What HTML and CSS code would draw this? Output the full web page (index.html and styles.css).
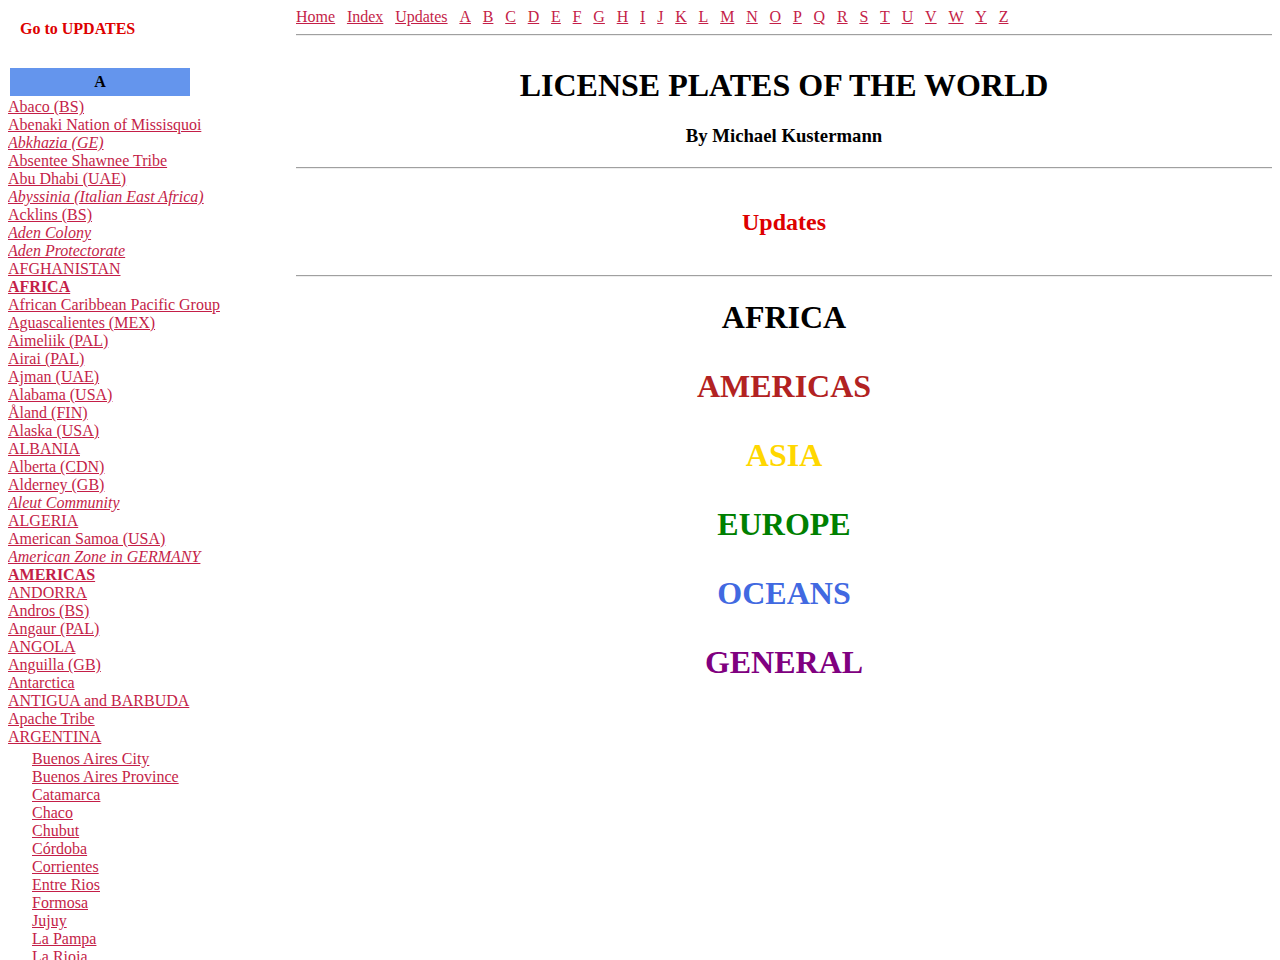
FILE: index.html
```html
<!DOCTYPE html>
<html lang="en">
<head>
    <meta charset="UTF-8">
    <title>License Plates of the World</title>
    <link rel="stylesheet" href="styles.css">
</head>
<body>

    <div class="page">
        <div class="side">
            <p class="goto"><a href="#updates">Go to UPDATES</a></p>

            <div class="letter">A</div>
            <ul class="countries">
                <li><a href="#">Abaco (BS)</a></li>
                <li><a href="#">Abenaki Nation of Missisquoi</a></li>
                <li><a href="#" class="old">Abkhazia (GE)</a></li>
                <li><a href="#">Absentee Shawnee Tribe</a></li>
                <li><a href="#">Abu Dhabi (UAE)</a></li>
                <li><a href="#" class="old">Abyssinia (Italian East Africa)</a></li>
                <li><a href="#">Acklins (BS)</a></li>
                <li><a href="#" class="old">Aden Colony</a></li>
                <li><a href="#" class="old">Aden Protectorate</a></li>
                <li><a href="#">AFGHANISTAN</a></li>
                <li><a href="#" class="region">AFRICA</a></li>
                <li><a href="#">African Caribbean Pacific Group</a></li>
                <li><a href="#">Aguascalientes (MEX)</a></li>
                <li><a href="#">Aimeliik (PAL)</a></li>
                <li><a href="#">Airai (PAL)</a></li>
                <li><a href="#">Ajman (UAE)</a></li>
                <li><a href="#">Alabama (USA)</a></li>
                <li><a href="#">Åland (FIN)</a></li>
                <li><a href="#">Alaska (USA)</a></li>
                <li><a href="#">ALBANIA</a></li>
                <li><a href="#">Alberta (CDN)</a></li>
                <li><a href="#">Alderney (GB)</a></li>
                <li><a href="#" class="old">Aleut Community</a></li>
                <li><a href="#">ALGERIA</a></li>
                <li><a href="#">American Samoa (USA)</a></li>
                <li><a href="#" class="old">American Zone in GERMANY</a></li>
                <li><a href="#" class="region">AMERICAS</a></li>
                <li><a href="#">ANDORRA</a></li>
                <li><a href="#">Andros (BS)</a></li>
                <li><a href="#">Angaur (PAL)</a></li>
                <li><a href="#">ANGOLA</a></li>
                <li><a href="#">Anguilla (GB)</a></li>
                <li><a href="#">Antarctica</a></li>
                <li><a href="#">ANTIGUA and BARBUDA</a></li>
                <li><a href="#">Apache Tribe</a></li>
                <li>
                    <a href="#">ARGENTINA</a>
                    <ul class="provinces">
                        <li><a href="#">Buenos Aires City</a></li>
                        <li><a href="#">Buenos Aires Province</a></li>
                        <li><a href="#">Catamarca</a></li>
                        <li><a href="#">Chaco</a></li>
                        <li><a href="#">Chubut</a></li>
                        <li><a href="#">Córdoba</a></li>
                        <li><a href="#">Corrientes</a></li>
                        <li><a href="#">Entre Rios</a></li>
                        <li><a href="#">Formosa</a></li>
                        <li><a href="#">Jujuy</a></li>
                        <li><a href="#">La Pampa</a></li>
                        <li><a href="#">La Rioja</a></li>
                        <li><a href="#">Mendoza</a></li>
                        <li><a href="#">Misiones</a></li>
                        <li><a href="#">Neuquén</a></li>
                    </ul>
                </li>
            </ul>
        </div>

        <div class="main">
            <nav class="topnav">
                <a href="#">Home</a>
                <a href="#">Index</a>
                <a href="#">Updates</a>
                <a href="#">A</a>
                <a href="#">B</a>
                <a href="#">C</a>
                <a href="#">D</a>
                <a href="#">E</a>
                <a href="#">F</a>
                <a href="#">G</a>
                <a href="#">H</a>
                <a href="#">I</a>
                <a href="#">J</a>
                <a href="#">K</a>
                <a href="#">L</a>
                <a href="#">M</a>
                <a href="#">N</a>
                <a href="#">O</a>
                <a href="#">P</a>
                <a href="#">Q</a>
                <a href="#">R</a>
                <a href="#">S</a>
                <a href="#">T</a>
                <a href="#">U</a>
                <a href="#">V</a>
                <a href="#">W</a>
                <a href="#">Y</a>
                <a href="#">Z</a>
            </nav>
            <hr>

            <h1 class="title">LICENSE PLATES OF THE WORLD</h1>
            <h3 class="author">By Michael Kustermann</h3>
            <hr>

            <h2 class="updates" id="updates">Updates</h2>
            <hr>

            <div class="regions">
                <div class="africa">AFRICA</div>
                <div class="americas">AMERICAS</div>
                <div class="asia">ASIA</div>
                <div class="europe">EUROPE</div>
                <div class="oceans">OCEANS</div>
                <div class="general">GENERAL</div>
            </div>
        </div>
    </div>

</body>
</html>
```

FILE: styles.css
```css
body {
    margin: 8px;
    font-family: "Liberation Serif", "Times New Roman", serif;
    font-size: 16px;
    color: #000;
    background-color: #fff;
}

a {
    color: #c41e48;
}

.page {
    display: grid;
    grid-template-columns: 288px 1fr;
}

/* left index column */
.side {
    line-height: 18px;
}

.goto {
    margin: 12px 0 0 12px;
    font-weight: bold;
}

.goto a {
    color: #dd0000;
    text-decoration: none;
}

.letter {
    width: 180px;
    margin: 30px 0 1px 2px;
    background-color: #6495ed;
    font-weight: bold;
    text-align: center;
    line-height: 28px;
}

.countries {
    list-style: none;
    margin: 0;
    padding: 1px 0 0 0;
}

.countries .old {
    font-style: italic;
}

.countries .region {
    font-weight: bold;
}

.provinces {
    list-style: none;
    margin: 4px 0 0 0;
    padding-left: 24px;
}

/* right content */
.topnav {
    display: flex;
    gap: 11.8px;
    line-height: 18px;
}

hr {
    margin: 8px 0 0 0;
    border: none;
    border-top: 1px solid #a0a0a0;
    border-bottom: 1px solid #eeeeee;
}

.title {
    margin: 31px 0 0 0;
    font-size: 32px;
    text-align: center;
    line-height: 37px;
}

.author {
    margin: 21px 0 20px 0;
    font-size: 18.72px;
    text-align: center;
    line-height: 22px;
}

.updates {
    margin: 39px 0 39px 0;
    color: #dd0000;
    font-size: 24px;
    text-align: center;
    line-height: 28px;
}

.regions {
    display: flex;
    flex-direction: column;
    gap: 32px;
    padding-top: 22px;
    font-size: 32px;
    font-weight: bold;
    text-align: center;
    line-height: 37px;
}

.africa { color: #000000; }
.americas { color: #b22222; }
.asia { color: #ffd700; }
.europe { color: #008000; }
.oceans { color: #4169e1; }
.general { color: #800080; }
```
